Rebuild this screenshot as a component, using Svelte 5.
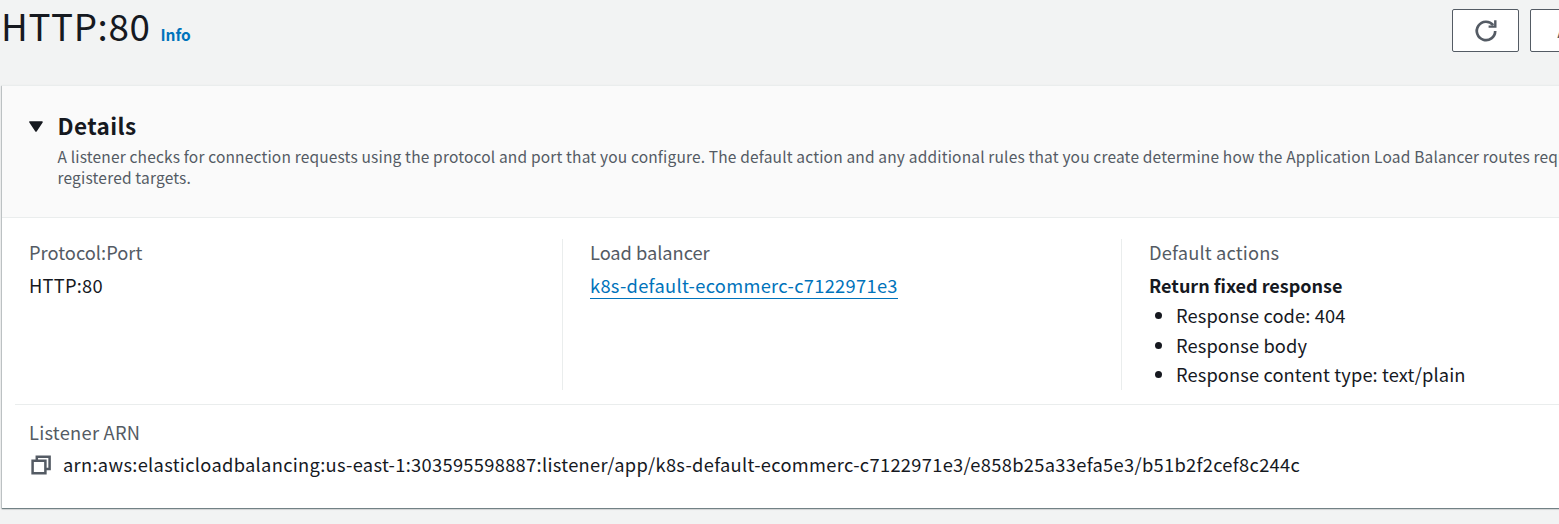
<script>
  const responses = ['Response code: 404', 'Response body', 'Response content type: text/plain'];
  const arn = 'arn:aws:elasticloadbalancing:us-east-1:303595598887:listener/app/k8s-default-ecommerc-c7122971e3/e858b25a33efa5e3/b51b2f2cef8c244c';
</script>

<div class="page">
  <header class="top">
    <div class="title">
      <h1>HTTP:80</h1>
      <a class="info" href="#info">Info</a>
    </div>
    <div class="buttons">
      <button aria-label="Refresh">
        <svg width="24" height="24" viewBox="0 0 24 24" fill="none" stroke="#545b64" stroke-width="2.7">
          <path d="M21.2 12A9.2 9.2 0 1 1 19.2 6.2" />
          <path d="M21.3 1.2V7.6H14.6" stroke-width="2.4" />
        </svg>
      </button>
      <button class="actions">Actions</button>
    </div>
  </header>

  <section class="card">
    <div class="card-head">
      <svg class="caret" width="14" height="12" viewBox="0 0 14 12">
        <path d="M1 1H13L7 10Z" fill="#16191f" stroke="#16191f" stroke-width="1.6" stroke-linejoin="round" />
      </svg>
      <div class="head-text">
        <h2>Details</h2>
        <p>
          A listener checks for connection requests using the protocol and port that you configure. The default action and any additional rules that you create determine how the Application Load Balancer routes requests to its
          <span class="tail">registered targets.</span>
        </p>
      </div>
    </div>

    <div class="body">
      <div class="columns">
        <div class="col">
          <div class="label">Protocol:Port</div>
          <div class="value port">HTTP:80</div>
        </div>
        <div class="col">
          <div class="label balancer">Load balancer</div>
          <div class="value"><a class="link" href="#lb">k8s-default-ecommerc-c7122971e3</a></div>
        </div>
        <div class="col">
          <div class="label actions-label">Default actions</div>
          <div class="value strong">Return fixed response</div>
          <ul>
            {#each responses as item}
              <li>{item}</li>
            {/each}
          </ul>
        </div>
      </div>
      <div class="arn">
        <div class="label arn-label">Listener ARN</div>
        <div class="arn-row">
          <svg width="20" height="20" viewBox="0 0 20 20" fill="none" stroke="#545b64" stroke-width="2.5">
            <path d="M1.6 5.7H14.4V18.3H1.6Z" />
            <path d="M5.8 5.5V1.7H18.6V14.1H14.6" />
          </svg>
          <span>{arn}</span>
        </div>
      </div>
    </div>
  </section>
</div>

<style>
  :global(body) { background: #f2f3f3; overflow: hidden; }
  .page {
    height: 524px;
    overflow: hidden;
    color: #16191f;
    background: #f2f3f3;
    font: 18.3px/24px "Noto Sans CJK SC", "Noto Sans", sans-serif;
  }
  .top { display: flex; justify-content: space-between; height: 85px; }
  .title { display: flex; align-items: baseline; height: 50px; gap: 10px; }
  h1 { margin: 0 0 0 1px; font-size: 36.8px; line-height: 51px; font-weight: 400; letter-spacing: .6px; }
  .info { font-size: 15.5px; font-weight: 700; color: #0073bb; text-decoration: none; }
  .buttons { display: flex; gap: 11px; padding-top: 9px; margin-right: -90px; }
  button {
    display: flex; align-items: center; justify-content: center;
    box-sizing: border-box; width: 67px; height: 43px; padding: 0;
    border: 1px solid #545b64; border-radius: 2px; background: #fff;
  }
  .actions { width: 119px; font: 700 17.5px "Noto Sans CJK SC", sans-serif; color: #545b64; }
  .card {
    box-sizing: border-box; height: 423px; margin-left: 2px; width: 1700px;
    background: #fff; border-top: 1px solid #eaeded;
    box-shadow: 0 1px 1px 0 rgba(0, 28, 36, .4), -1px 1px 1px 0 rgba(0, 28, 36, .12), 0 1px 2px rgba(0, 28, 36, .15);
  }
  .card-head {
    display: flex; box-sizing: border-box; height: 132px; padding: 24px 0 0 27px;
    background: #fafafa; border-bottom: 1px solid #eaeded;
  }
  .caret { margin: 11px 14.5px 0 0; }
  h2 { margin: 0; font-size: 22.5px; line-height: 30px; font-weight: 700; letter-spacing: .4px; }
  p { margin: 6px 0 0; font-size: 15.5px; line-height: 21px; color: #545b64; letter-spacing: .168px; white-space: nowrap; }
  .tail { display: block; letter-spacing: .18px; }
  .columns { display: flex; padding: 21px 0 14px; margin-left: 13px; border-bottom: 1px solid #eaeded; }
  .col { box-sizing: border-box; width: 559px; height: 151px; padding: 1px 0 0 27px; border-left: 1px solid #eaeded; }
  .col:first-child { width: 547px; padding-left: 14px; border-left: 0; }
  .label { color: #545b64; }
  .value { margin-top: 9px; }
  .port { letter-spacing: .25px; }
  .balancer { letter-spacing: -.05px; }
  .actions-label { letter-spacing: .15px; }
  .link {
    display: inline-block; height: 25px; color: #0073bb; text-decoration: none;
    border-bottom: 1px solid #0073bb; letter-spacing: .3px;
  }
  .strong { font-size: 18px; font-weight: 700; }
  ul { margin: 4px 0 0; padding-left: 27px; line-height: 29.6px; letter-spacing: .11px; }
  .arn { padding: 15px 0 0 27px; }
  .arn-label { letter-spacing: .25px; }
  .arn-row { display: flex; align-items: center; gap: 12px; margin: 8px 0 0 2px; letter-spacing: .308px; white-space: nowrap; }
  .arn-row svg { margin-top: 2px; }
</style>
